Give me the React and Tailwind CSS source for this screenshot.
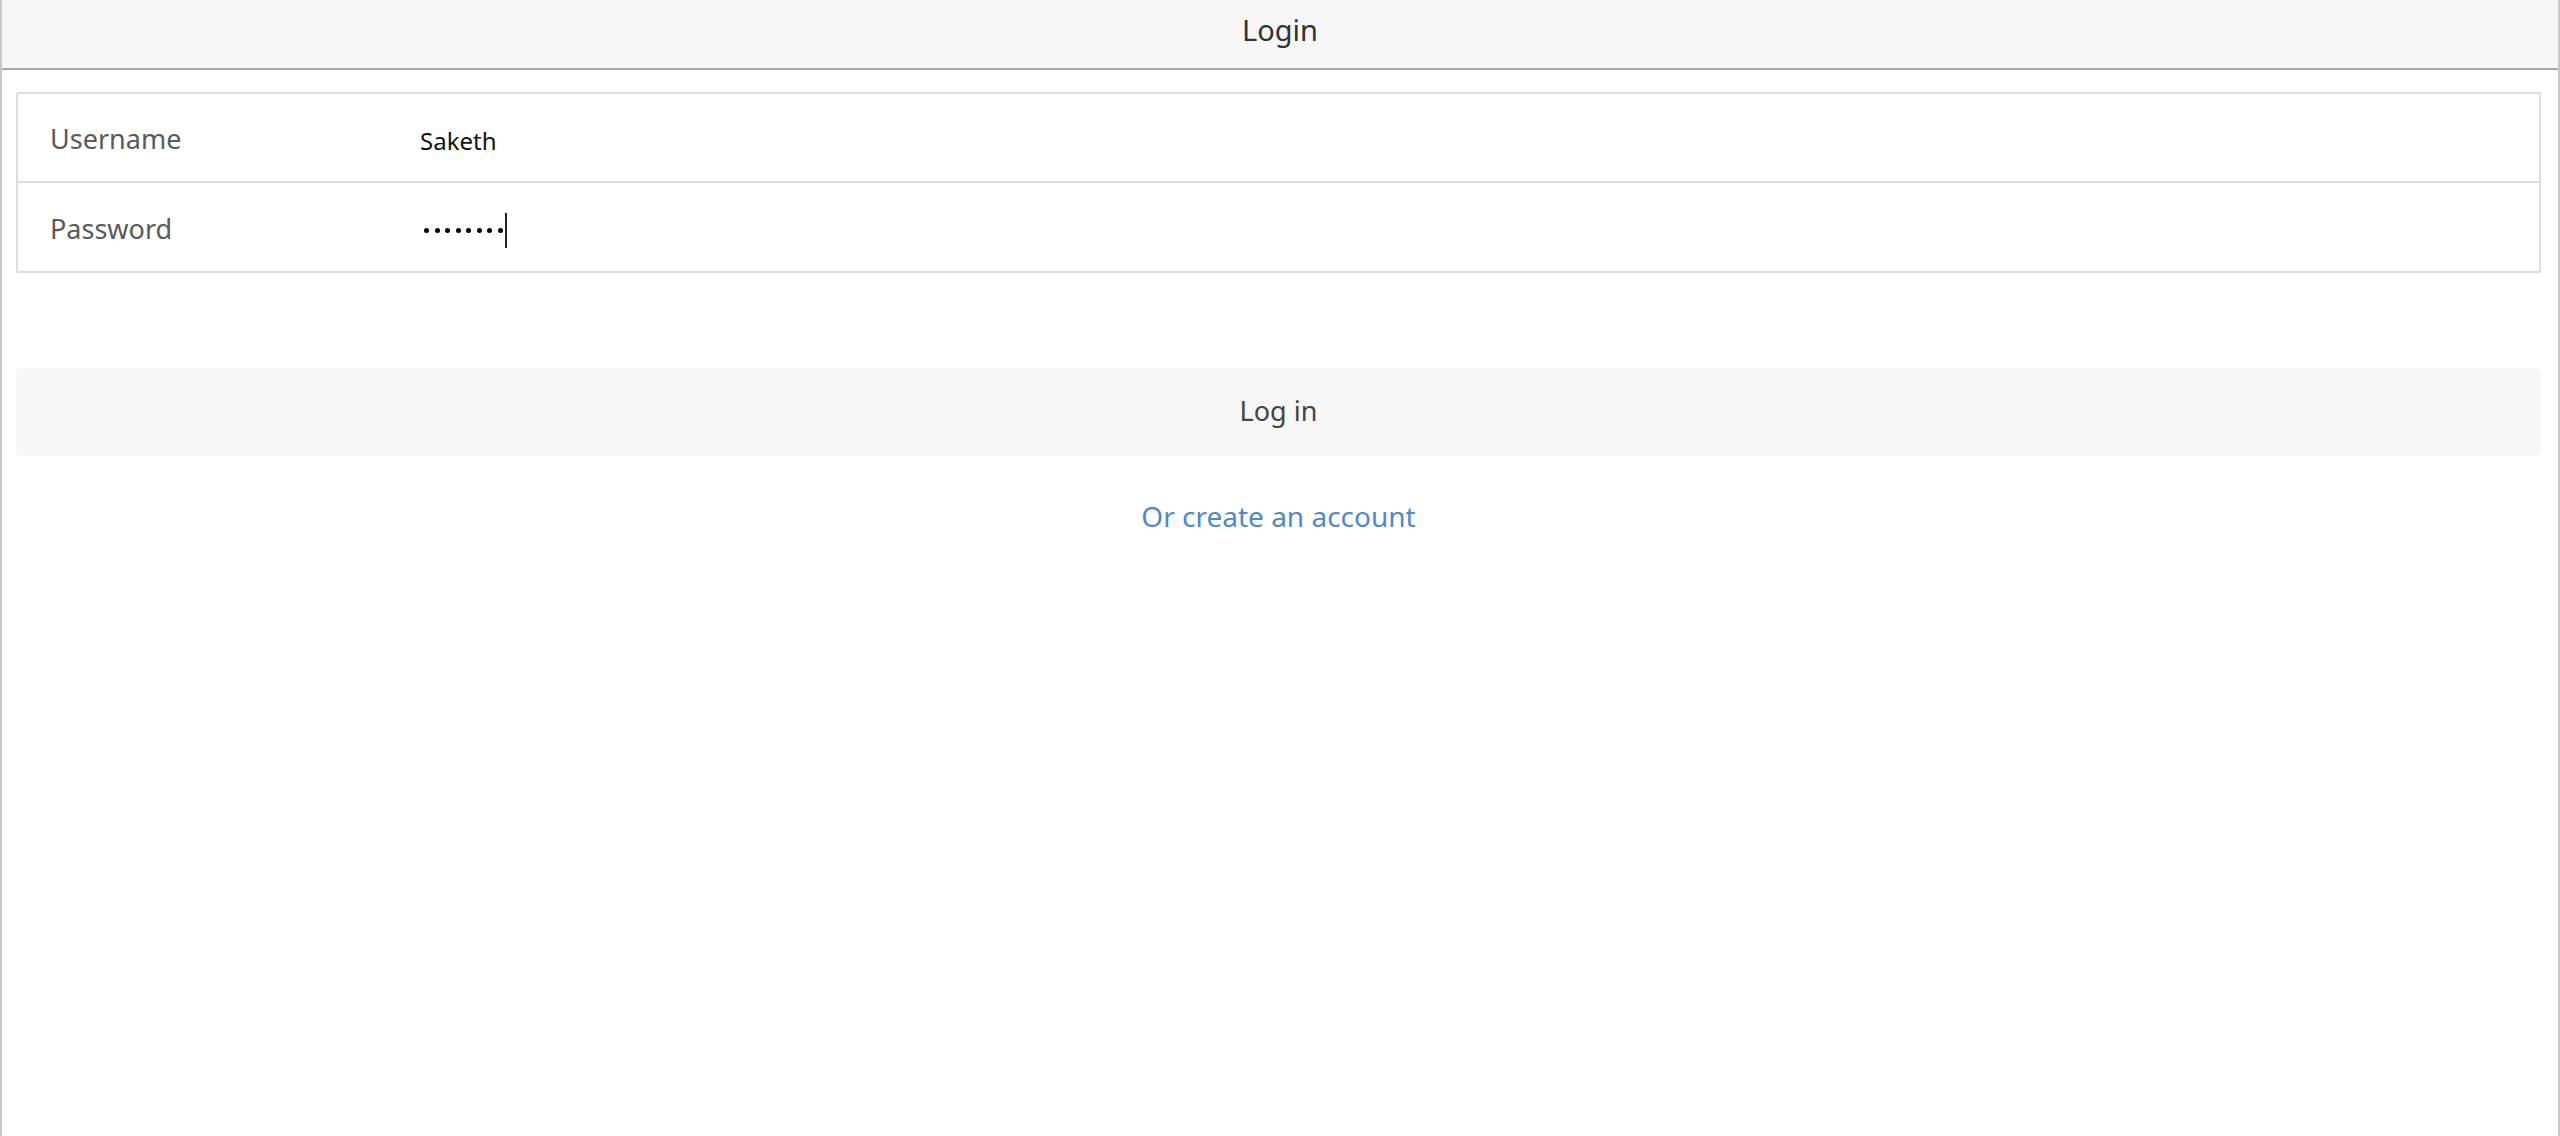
export default function App() {
  return (
    <div className="w-[2560px] h-[1136px] bg-white border-l-2 border-r-2 border-[#c8c8c8] flex flex-col font-['Noto_Sans','Open_Sans',sans-serif] overflow-hidden">
      <header className="h-[70px] shrink-0 bg-[#f7f7f7] border-b-2 border-[#a8a8a8] flex items-center justify-center pb-[8px] text-[29px] text-[#333333]">
        Login
      </header>
      <main className="flex flex-col pl-[14px] pr-[17px] pt-[22px]">
        <div className="border-2 border-[#dedede] rounded-[2px] flex flex-col">
          <div className="h-[89px] flex items-center pt-[4px] border-b-2 border-[#dedede]">
            <div className="w-[402px] pl-[32px] text-[27px] text-[#5a5a5a]">Username</div>
            <div className="text-[24px] text-[#111111] pt-[2px]">Saketh</div>
          </div>
          <div className="h-[88px] flex items-center pt-[4px]">
            <div className="w-[402px] pl-[32px] text-[27px] text-[#5a5a5a]">Password</div>
            <div className="flex items-center h-[36px] pt-[2px]">
              <div className="flex items-center gap-[5.5px] pl-[4px]">
                {Array.from({ length: 8 }).map((_, i) => (
                  <span key={i} className="block w-[5px] h-[5px] rounded-full bg-black" />
                ))}
              </div>
              <span className="block w-[2px] h-[35px] bg-[#222222] ml-[2px]" />
            </div>
          </div>
        </div>
        <button className="mt-[95px] h-[88px] rounded-[6px] bg-[#f7f7f7] flex items-center justify-center pb-[2px] text-[27px] text-[#444444]">
          Log in
        </button>
        <div className="mt-[39px] flex justify-center">
          <a className="text-[28px] text-[#5089c6] cursor-pointer">Or create an account</a>
        </div>
      </main>
    </div>
  );
}
